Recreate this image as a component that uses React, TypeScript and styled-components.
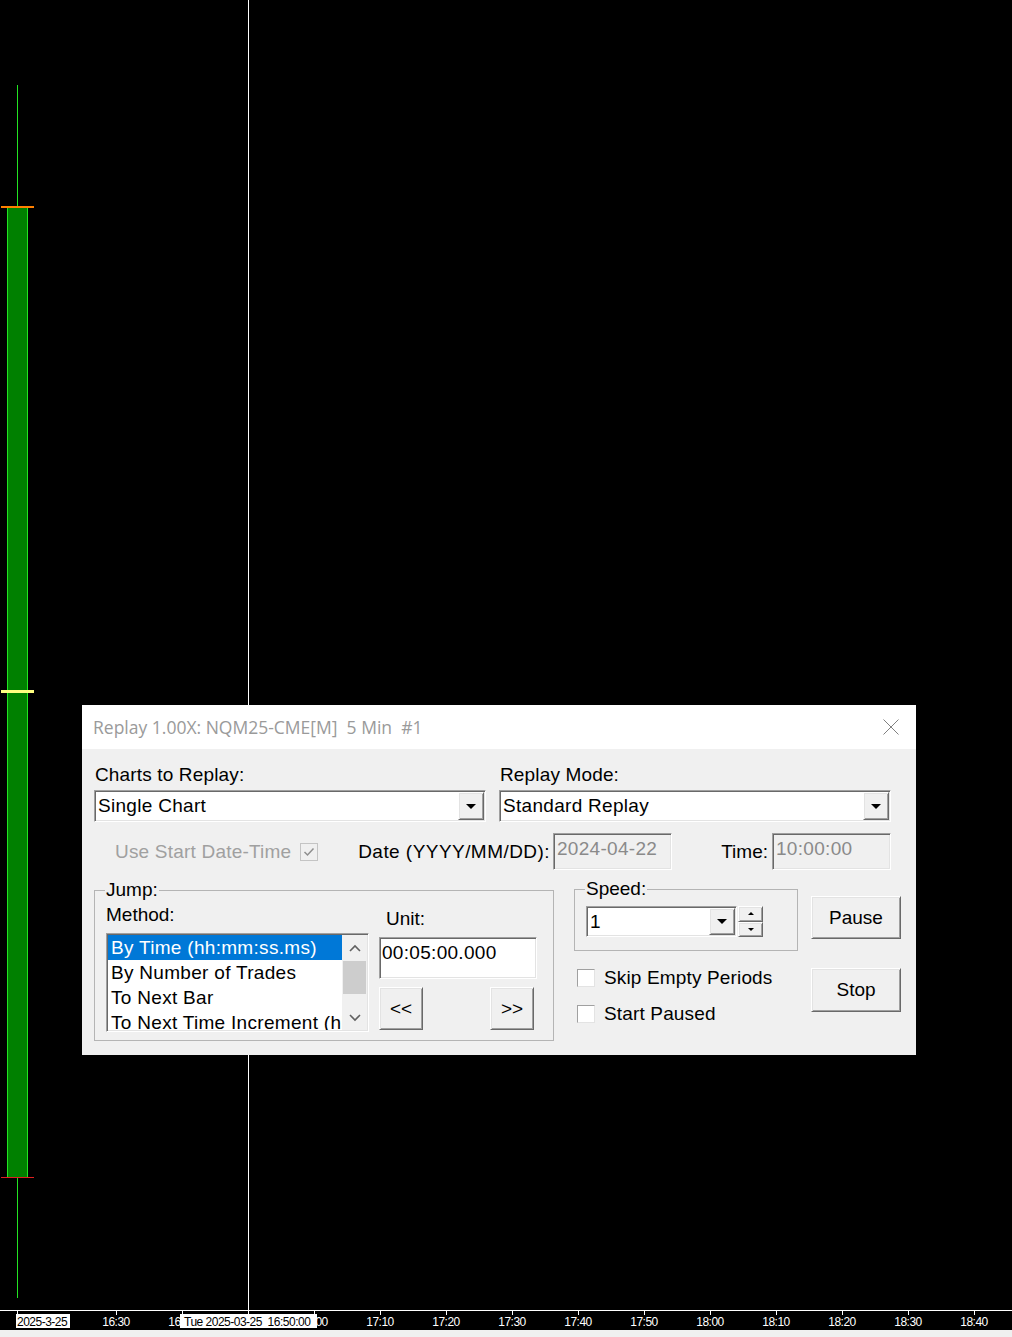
import React from 'react';
import styled, { createGlobalStyle, css } from 'styled-components';

const GlobalStyle = createGlobalStyle`
  html, body {
    margin: 0;
    padding: 0;
    background: #000;
  }
  body {
    font-family: "Liberation Sans", Arial, sans-serif;
  }
  *, *::before, *::after {
    box-sizing: border-box;
  }
`;

// classic 3D edges
const sunken = css`
  border: 1px solid;
  border-color: #a0a0a0 #ffffff #ffffff #a0a0a0;
  box-shadow: inset 1px 1px 0 #696969, inset -1px -1px 0 #e3e3e3;
  padding: 1px;
`;

const raised = css`
  border: 1px solid;
  border-color: #ffffff #696969 #696969 #ffffff;
  box-shadow: inset 1px 1px 0 #e3e3e3, inset -1px -1px 0 #a0a0a0;
  background: #f0f0f0;
`;

const Screen = styled.div`
  width: 1012px;
  height: 1337px;
  display: flex;
  flex-direction: column;
  background: #000;
  overflow: hidden;
`;

const ChartPane = styled.div`
  position: relative;
  flex: 0 0 1310px;
`;

const Crosshair = styled.div<{ $x: number }>`
  position: absolute;
  top: 0;
  bottom: 0;
  left: ${({ $x }) => $x}px;
  width: 1px;
  background: #fff;
`;

const Wick = styled.div<{ $x: number; $top: number; $bottom: number }>`
  position: absolute;
  left: ${({ $x }) => $x}px;
  top: ${({ $top }) => $top}px;
  height: ${({ $top, $bottom }) => $bottom - $top}px;
  width: 1px;
  background: #22e422;
`;

const CandleBody = styled.div<{ $x: number; $top: number; $bottom: number }>`
  position: absolute;
  left: ${({ $x }) => $x - 10}px;
  top: ${({ $top }) => $top}px;
  height: ${({ $top, $bottom }) => $bottom - $top}px;
  width: 21px;
  background: #008000;
  border-left: 1px solid #22e422;
  border-right: 1px solid #22e422;
`;

const Level = styled.div<{ $y: number; $h: number; $color: string }>`
  position: absolute;
  left: 1px;
  width: 33px;
  top: ${({ $y }) => $y}px;
  height: ${({ $h }) => $h}px;
  background: ${({ $color }) => $color};
`;

const TimeAxis = styled.div`
  position: relative;
  flex: 0 0 20px;
  border-top: 1px solid #fff;
  color: #fff;
  font-size: 12px;
  letter-spacing: -0.5px;
`;

const Tick = styled.span<{ $x: number }>`
  position: absolute;
  top: 0;
  left: ${({ $x }) => $x}px;
  width: 1px;
  height: 4px;
  background: #fff;
`;

const TickLabel = styled.span<{ $x: number }>`
  position: absolute;
  top: 4px;
  left: ${({ $x }) => $x}px;
  transform: translateX(-50%);
  line-height: 14px;
  white-space: nowrap;
`;

const AxisTag = styled.span<{ $x: number; $width: number; $pad: number }>`
  position: absolute;
  top: 3px;
  left: ${({ $x }) => $x}px;
  width: ${({ $width }) => $width}px;
  padding-left: ${({ $pad }) => $pad}px;
  padding-top: 1px;
  height: 14px;
  line-height: 14px;
  white-space: pre;
  background: #fff;
  color: #000;
`;

const StatusStrip = styled.div`
  flex: 1;
  background: #f0f0f0;
`;

/* ---------- replay window ---------- */

const Window = styled.div`
  position: absolute;
  left: 82px;
  top: 705px;
  width: 834px;
  height: 350px;
  display: flex;
  flex-direction: column;
  background: #f0f0f0;
  color: #000;
  font-size: 19px;
`;

const TitleBar = styled.div`
  flex: 0 0 44px;
  display: flex;
  align-items: center;
  justify-content: space-between;
  padding: 0 17px 0 11px;
  background: #fff;
`;

const Title = styled.span`
  font-family: "Open Sans", "Noto Sans", sans-serif;
  font-size: 17.5px;
  color: #9a9a9a;
  white-space: pre;
`;

const CloseGlyph = styled.svg`
  width: 16px;
  height: 16px;
  display: block;
`;

const Content = styled.div`
  padding: 15px 15px 14px 12px;
  display: flex;
  flex-direction: column;
`;

const TopRow = styled.div`
  display: grid;
  grid-template-columns: 392px 392px;
  column-gap: 13px;
`;

const Field = styled.div`
  display: flex;
  flex-direction: column;
  gap: 4px;
`;

const Label = styled.span<{ $indent?: number; $muted?: boolean; $tracking?: number }>`
  display: block;
  line-height: 22px;
  padding-left: ${({ $indent = 1 }) => $indent}px;
  letter-spacing: ${({ $tracking = 0 }) => $tracking}px;
  white-space: nowrap;
  color: ${({ $muted }) => ($muted ? '#a0a0a0' : '#000')};
`;

const Combo = styled.div<{ $width?: number; $height: number }>`
  ${sunken}
  display: flex;
  width: ${({ $width }) => ($width ? `${$width}px` : 'auto')};
  height: ${({ $height }) => $height}px;
  background: #fff;
`;

const ComboText = styled.span`
  flex: 1;
  display: flex;
  align-items: center;
  padding-left: 2px;
  letter-spacing: 0.3px;
  white-space: nowrap;
`;

const DropButton = styled.span`
  ${raised}
  flex: 0 0 26px;
  display: flex;
  align-items: center;
  justify-content: center;
`;

const Caret = styled.span<{ $up?: boolean; $size?: number }>`
  width: 0;
  height: 0;
  border-left: ${({ $size = 5 }) => $size}px solid transparent;
  border-right: ${({ $size = 5 }) => $size}px solid transparent;
  ${({ $up, $size = 5 }) =>
    $up
      ? `border-bottom: ${$size}px solid #000;`
      : `border-top: ${$size}px solid #000;`}
`;

const DateRow = styled.div`
  display: grid;
  grid-template-columns: 224px 354px 219px;
  height: 37px;
  margin-top: 11px;
  align-items: center;
`;

const OptionCell = styled.div`
  display: flex;
  align-items: center;
  gap: 9px;
  padding-left: 21px;
`;

const InputCell = styled.div<{ $gap: number }>`
  display: flex;
  align-items: center;
  justify-content: flex-end;
  gap: ${({ $gap }) => $gap}px;
`;

const TextBox = styled.div<{ $width: number; $height: number; $disabled?: boolean }>`
  ${sunken}
  width: ${({ $width }) => $width}px;
  height: ${({ $height }) => $height}px;
  padding: ${({ $disabled }) => ($disabled ? '4px 3px' : '4px 2px')};
  line-height: 22px;
  letter-spacing: 0.3px;
  white-space: nowrap;
  background: ${({ $disabled }) => ($disabled ? '#f0f0f0' : '#fff')};
  color: ${({ $disabled }) => ($disabled ? '#8a8a8a' : '#000')};
`;

const CheckBox = styled.span<{ $disabled?: boolean }>`
  flex: 0 0 18px;
  width: 18px;
  height: 18px;
  display: inline-flex;
  align-items: center;
  justify-content: center;
  border: 1px solid;
  border-color: ${({ $disabled }) =>
    $disabled ? '#c4c4c4' : '#a0a0a0 #e3e3e3 #e3e3e3 #a0a0a0'};
  background: ${({ $disabled }) => ($disabled ? '#f0f0f0' : '#fff')};
`;

const BottomRow = styled.div`
  display: flex;
  align-items: flex-start;
  margin-top: 9px;
`;

const GroupBox = styled.fieldset<{ $width: number; $shift?: number }>`
  margin: ${({ $shift = 0 }) => $shift}px 0 0 0;
  width: ${({ $width }) => $width}px;
  min-width: 0;
  border: 1px solid #b4b4b4;
`;

const JumpGroup = styled(GroupBox)`
  padding: 0 16px 8px 11px;
  display: grid;
  grid-template-columns: 263px 158px;
  column-gap: 10px;
`;

const SpeedGroup = styled(GroupBox)`
  padding: 0 0 13px 11px;
`;

const Caption = styled.legend`
  padding: 0 1px;
  margin-left: -1px;
  line-height: 22px;
  font-size: 19px;
`;

const MethodColumn = styled.div`
  display: flex;
  flex-direction: column;
  padding-top: 3px;
  gap: 7px;
`;

const UnitColumn = styled.div`
  display: flex;
  flex-direction: column;
  padding-top: 7px;
  gap: 7px;
`;

const StepButtons = styled.div`
  display: flex;
  justify-content: space-between;
  padding-right: 3px;
  margin-top: 1px;
`;

const ListBox = styled.div`
  ${sunken}
  height: 99px;
  display: flex;
  background: #fff;
  overflow: hidden;
`;

const ListItems = styled.div`
  flex: 1;
  min-width: 0;
  overflow: hidden;
`;

const ListItem = styled.div<{ $selected?: boolean }>`
  height: 25px;
  line-height: 25px;
  padding-left: 3px;
  letter-spacing: 0.3px;
  white-space: nowrap;
  background: ${({ $selected }) => ($selected ? '#0078d7' : 'transparent')};
  color: ${({ $selected }) => ($selected ? '#fff' : '#000')};
`;

const ScrollBar = styled.div`
  flex: 0 0 25px;
  display: flex;
  flex-direction: column;
  background: #f0f0f0;
`;

const ScrollArrow = styled.div`
  flex: 0 0 25px;
  display: flex;
  align-items: center;
  justify-content: center;
`;

const ScrollTrack = styled.div`
  flex: 1;
  padding: 1px 1px 0;
`;

const ScrollThumb = styled.div`
  height: 33px;
  background: #cdcdcd;
`;

const SpeedColumn = styled.div`
  margin-left: 20px;
  width: 224px;
  display: flex;
  flex-direction: column;
`;

const SpeedRow = styled.div`
  display: flex;
  gap: 1px;
  margin-top: 6px;
`;

const Spinner = styled.div`
  width: 25px;
  height: 31px;
  display: flex;
  flex-direction: column;
`;

const SpinHalf = styled.span`
  ${raised}
  flex: 1;
  display: flex;
  align-items: center;
  justify-content: center;
`;

const Options = styled.div`
  display: flex;
  flex-direction: column;
  gap: 14px;
  margin-top: 16px;
  padding-left: 3px;
`;

const OptionRow = styled.label`
  display: flex;
  align-items: center;
  gap: 9px;
  line-height: 22px;
  letter-spacing: 0.15px;
`;

const ActionColumn = styled.div`
  margin-left: 13px;
  width: 90px;
  display: flex;
  flex-direction: column;
  gap: 29px;
  padding-top: 17px;
`;

const PushButton = styled.button<{ $width: number; $height: number }>`
  ${raised}
  width: ${({ $width }) => $width}px;
  height: ${({ $height }) => $height}px;
  padding: 0;
  font-family: inherit;
  font-size: 19px;
  color: #000;
`;

const TIMES = [
  '16:30', '16:40', '16:50', '17:00', '17:10', '17:20', '17:30',
  '17:40', '17:50', '18:00', '18:10', '18:20', '18:30', '18:40',
];
const AXIS_START = 116;
const AXIS_STEP = 66;

const METHODS = [
  'By Time (hh:mm:ss.ms)',
  'By Number of Trades',
  'To Next Bar',
  'To Next Time Increment (hh:mm:ss)',
];

const Chevron = ({ up }: { up?: boolean }) => (
  <svg width="12" height="8" viewBox="0 0 12 8">
    <path
      d={up ? 'M1 7 L6 2 L11 7' : 'M1 1 L6 6 L11 1'}
      fill="none"
      stroke="#606060"
      strokeWidth="1.6"
    />
  </svg>
);

const Candle = ({ x, high, open, close, low }: { x: number; high: number; open: number; close: number; low: number }) => (
  <>
    <Wick $x={x} $top={high} $bottom={low} />
    <CandleBody $x={x} $top={open} $bottom={close} />
  </>
);

const ReplayWindow = () => (
  <Window>
    <TitleBar>
      <Title>Replay 1.00X: NQM25-CME[M]  5 Min  #1</Title>
      <CloseGlyph viewBox="0 0 16 16">
        <path d="M0.5 0.5 L15.5 15.5 M15.5 0.5 L0.5 15.5" stroke="#808080" strokeWidth="1" />
      </CloseGlyph>
    </TitleBar>
    <Content>
      <TopRow>
        <Field>
          <Label $tracking={0.15}>Charts to Replay:</Label>
          <Combo $height={32}>
            <ComboText>Single Chart</ComboText>
            <DropButton><Caret /></DropButton>
          </Combo>
        </Field>
        <Field>
          <Label $tracking={0.15}>Replay Mode:</Label>
          <Combo $height={32}>
            <ComboText>Standard Replay</ComboText>
            <DropButton><Caret /></DropButton>
          </Combo>
        </Field>
      </TopRow>

      <DateRow>
        <OptionCell>
          <Label $indent={0} $muted $tracking={0.2}>Use Start Date-Time</Label>
          <CheckBox $disabled>
            <svg width="14" height="14" viewBox="0 0 14 14">
              <path d="M2.5 7 L5.5 10 L11.5 3.5" fill="none" stroke="#8f8f8f" strokeWidth="1.5" />
            </svg>
          </CheckBox>
        </OptionCell>
        <InputCell $gap={3}>
          <Label $indent={0} $tracking={0.45}>Date (YYYY/MM/DD):</Label>
          <TextBox $width={119} $height={37} $disabled>2024-04-22</TextBox>
        </InputCell>
        <InputCell $gap={4}>
          <Label $indent={0}>Time:</Label>
          <TextBox $width={119} $height={37} $disabled>10:00:00</TextBox>
        </InputCell>
      </DateRow>

      <BottomRow>
        <JumpGroup $width={460}>
          <Caption>Jump:</Caption>
          <MethodColumn>
            <Label $indent={0}>Method:</Label>
            <ListBox>
              <ListItems>
                {METHODS.map((m, i) => (
                  <ListItem key={m} $selected={i === 0}>{m}</ListItem>
                ))}
              </ListItems>
              <ScrollBar>
                <ScrollArrow><Chevron up /></ScrollArrow>
                <ScrollTrack><ScrollThumb /></ScrollTrack>
                <ScrollArrow><Chevron /></ScrollArrow>
              </ScrollBar>
            </ListBox>
          </MethodColumn>
          <UnitColumn>
            <Label $indent={7}>Unit:</Label>
            <TextBox $width={158} $height={42}>00:05:00.000</TextBox>
            <StepButtons>
              <PushButton $width={44} $height={43}>&lt;&lt;</PushButton>
              <PushButton $width={44} $height={43}>&gt;&gt;</PushButton>
            </StepButtons>
          </UnitColumn>
        </JumpGroup>

        <SpeedColumn>
          <SpeedGroup $width={224} $shift={-1}>
            <Caption>Speed:</Caption>
            <SpeedRow>
              <Combo $width={151} $height={31}>
                <ComboText>1</ComboText>
                <DropButton><Caret /></DropButton>
              </Combo>
              <Spinner>
                <SpinHalf><Caret $up $size={3} /></SpinHalf>
                <SpinHalf><Caret $size={3} /></SpinHalf>
              </Spinner>
            </SpeedRow>
          </SpeedGroup>
          <Options>
            <OptionRow><CheckBox />Skip Empty Periods</OptionRow>
            <OptionRow><CheckBox />Start Paused</OptionRow>
          </Options>
        </SpeedColumn>

        <ActionColumn>
          <PushButton $width={90} $height={43}>Pause</PushButton>
          <PushButton $width={90} $height={44}>Stop</PushButton>
        </ActionColumn>
      </BottomRow>
    </Content>
  </Window>
);

export default function App() {
  return (
    <>
      <GlobalStyle />
      <Screen>
        <ChartPane>
          <Crosshair $x={248} />
          <Candle x={17} high={85} open={207} close={1177} low={1298} />
          <Level $y={206} $h={2} $color="#ff8000" />
          <Level $y={690} $h={3} $color="#ffff80" />
          <Level $y={1177} $h={1} $color="#e02020" />
          <ReplayWindow />
        </ChartPane>
        <TimeAxis>
          {TIMES.map((t, i) => {
            const x = AXIS_START + AXIS_STEP * i;
            return (
              <React.Fragment key={t}>
                <Tick $x={x} />
                <TickLabel $x={x}>{t}</TickLabel>
              </React.Fragment>
            );
          })}
          <Tick $x={17} />
          <AxisTag $x={16} $width={54} $pad={1}>2025-3-25</AxisTag>
          <AxisTag $x={180} $width={137} $pad={4}>Tue 2025-03-25  16:50:00</AxisTag>
        </TimeAxis>
        <StatusStrip />
      </Screen>
    </>
  );
}
